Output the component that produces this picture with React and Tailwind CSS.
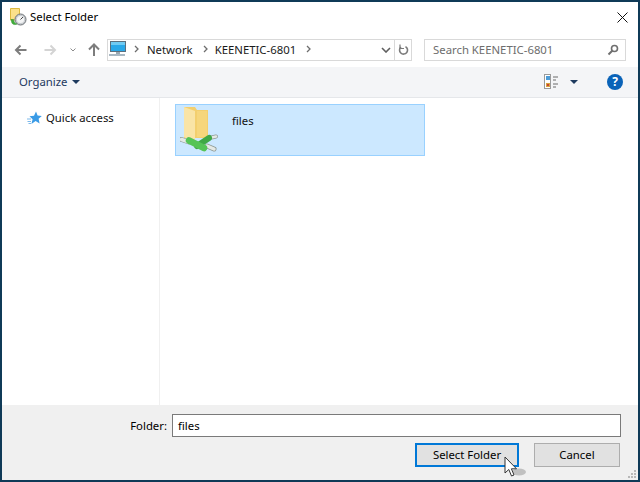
import React from 'react';

const font = "font-['Noto_Sans','Open_Sans',sans-serif]";

// title bar icon, folder with the green arrow and clock
const TitleIcon = () => (
  <svg width="18" height="18" viewBox="0 0 18 18" className="shrink-0">
    <path d="M1.5 0.5H10.5V12H1.5Z" fill="#fbe08a" stroke="#dcb93f" />
    <circle cx="11.5" cy="11.5" r="5.5" fill="#c8ccd0" stroke="#6f7478" />
    <circle cx="11.5" cy="11.5" r="3.6" fill="#f3f4f5" />
    <path d="M11.5 11.5L14 9" stroke="#444" strokeWidth="1" />
    <path d="M2 11.5H4.5C4.8 14 6 15.5 8 16C5 17.5 2.8 16 2.5 13.5Z" fill="#3fae3a" stroke="#2a8a28" strokeWidth="0.5" />
  </svg>
);

const Arrow = ({ color, flip }) => (
  <svg width="13" height="12" viewBox="0 0 13 12" className={flip ? 'rotate-180' : ''}>
    <path d="M12.5 6H2M6.5 1.5L2 6l4.5 4.5" fill="none" stroke={color} strokeWidth="2" />
  </svg>
);

const Crumb = () => (
  <svg width="6" height="8" viewBox="0 0 6 8" className="shrink-0">
    <path d="M1 1l3 3-3 3" fill="none" stroke="#6d6d6d" strokeWidth="1.3" />
  </svg>
);

const Pc = () => (
  <svg width="18" height="16" viewBox="0 0 18 16" className="shrink-0">
    <rect x="1.5" y="0.5" width="15" height="10" fill="#29a8e8" stroke="#5b6f7d" />
    <rect x="2" y="1" width="14" height="3" fill="#6fcbf3" />
    <rect x="7" y="11" width="4" height="2" fill="#9aa8b2" />
    <rect x="0" y="13" width="16" height="2" fill="#a9b8c3" />
  </svg>
);

const Caret = ({ color = '#1e3a5f' }) => (
  <svg width="8" height="4" viewBox="0 0 8 4" className="shrink-0">
    <path d="M0 0h8L4 4Z" fill={color} />
  </svg>
);

const ViewIcon = () => (
  <svg width="16" height="16" viewBox="0 0 16 16">
    <rect x="0.5" y="0.5" width="6" height="14" fill="#fff" stroke="#9a9a9a" />
    <rect x="2" y="2" width="4" height="4" fill="#4c9bd6" />
    <rect x="2" y="9" width="4" height="4" fill="#d9a441" />
    <rect x="3" y="10" width="2" height="2" fill="#c8432f" />
    <path d="M9 3h5M9 6h3M9 10h5M9 13h3" stroke="#6b6b6b" strokeWidth="1" />
  </svg>
);

// folder with the two network pipes under it
const NetFolder = () => (
  <svg width="40" height="50" viewBox="0 0 40 50" className="shrink-0">
    <path d="M4 1H15L17 4H28V32H4Z" fill="#f3cf6e" />
    <path d="M4 1L15 5V37L4 31Z" fill="#f9e4a6" />
    <path d="M17 5H27V31H17Z" fill="#f6d67c" />
    <path d="M1.5 33.5L9 36" stroke="#8f9a93" strokeWidth="5" strokeLinecap="round" />
    <path d="M1.5 33.5L9 36" stroke="#e4e9e5" strokeWidth="3.5" strokeLinecap="round" />
    <path d="M27 40L34 43" stroke="#8f9a93" strokeWidth="5" strokeLinecap="round" />
    <path d="M27 40L34 43" stroke="#e4e9e5" strokeWidth="3.5" strokeLinecap="round" />
    <path d="M29 32L36 30.5" stroke="#8f9a93" strokeWidth="4" strokeLinecap="round" />
    <path d="M29 32L36 30.5" stroke="#e4e9e5" strokeWidth="2.5" strokeLinecap="round" />
    <path d="M17 40L29 32" stroke="#3fa845" strokeWidth="6" strokeLinecap="round" />
    <path d="M9 34.5L24 42" stroke="#55c456" strokeWidth="6.5" strokeLinecap="round" />
  </svg>
);

const Star = () => (
  <svg width="15" height="14" viewBox="0 0 15 14" className="shrink-0">
    <path d="M9 0.5L10.6 4.6L14.8 5L11.6 7.8L12.6 12.5L8.6 10L4.4 13L5.6 8.2L2.5 5.2L7 4.8Z" fill="#3a9be6" />
    <path d="M0 8H4M0.5 10.5H4M1.5 12.5H4" stroke="#7db9ea" strokeWidth="1" />
  </svg>
);

const App = () => {
  return (
    <div className={`relative w-[640px] h-[482px] overflow-hidden bg-white border-2 border-[#0f3a57] text-[11.35px] text-black ${font} flex flex-col`}>
      {/* Title bar */}
      <div className="h-[30px] flex items-center pl-[7px] pr-[8px] shrink-0">
        <TitleIcon />
        <span className="ml-[3px]">Select Folder</span>
        <svg width="11" height="11" viewBox="0 0 11 11" className="ml-auto mr-[2px]">
          <path d="M0.5 0.5l10 10M10.5 0.5l-10 10" stroke="#111" strokeWidth="1" />
        </svg>
      </div>

      {/* Address row */}
      <div className="h-[35px] flex items-center shrink-0 pl-[12px]">
        <Arrow color="#7d7d7d" />
        <span className="w-[17px]" />
        <Arrow color="#d4d4d4" flip />
        <svg width="6" height="4" viewBox="0 0 6 4" className="ml-[13px]">
          <path d="M0.5 0.5L3 3l2.5-2.5" fill="none" stroke="#8c8c8c" />
        </svg>
        <svg width="12" height="13" viewBox="0 0 12 13" className="ml-[12px]">
          <path d="M6 13V2M1 6.5L6 1.5l5 5" fill="none" stroke="#7d7d7d" strokeWidth="2" />
        </svg>
        <div className="ml-[7px] w-[305px] h-[22px] border border-[#d9d9d9] flex items-center">
          <div className="pl-[1px] flex items-center grow">
            <Pc />
            <span className="ml-[7px]"><Crumb /></span>
            <span className="ml-[7px] text-[#1a1a1a]">Network</span>
            <span className="ml-[10px]"><Crumb /></span>
            <span className="ml-[6px] text-[#1a1a1a]">KEENETIC-6801</span>
            <span className="ml-[10px]"><Crumb /></span>
          </div>
          <svg width="10" height="6" viewBox="0 0 10 6" className="mr-[3px]">
            <path d="M1 1l4 4 4-4" fill="none" stroke="#5f5f5f" strokeWidth="1.6" />
          </svg>
          <div className="w-[17px] h-full border-l border-[#d9d9d9] flex items-center justify-center">
            <svg width="11" height="12" viewBox="0 0 11 12">
              <path d="M7.5 2.6A4 4 0 1 1 3 3" fill="none" stroke="#7a7a7a" strokeWidth="1.6" />
              <path d="M2 0.5V4.5H6" fill="none" stroke="#7a7a7a" strokeWidth="1.2" />
            </svg>
          </div>
        </div>
        <div className="ml-[12px] w-[202px] h-[22px] border border-[#d9d9d9] flex items-center pl-[8px] pr-[6px] text-[#6d6d6d]">
          <span>Search KEENETIC-6801</span>
          <svg width="12" height="12" viewBox="0 0 12 12" className="ml-auto">
            <circle cx="7.5" cy="4.5" r="3" fill="none" stroke="#6f6f6f" strokeWidth="1.6" />
            <path d="M5.5 6.5L1.5 10.5" stroke="#6f6f6f" strokeWidth="2" />
          </svg>
        </div>
      </div>

      {/* Toolbar */}
      <div className="h-[31px] bg-[#f4f5f7] border-b border-[#e5e7ea] flex items-center shrink-0 pl-[17px] pr-[15px]">
        <span className="text-[#1e3a5f]">Organize</span>
        <span className="ml-[5px]"><Caret /></span>
        <span className="ml-auto"><ViewIcon /></span>
        <span className="ml-[10px]"><Caret /></span>
        <div className="ml-[29px] w-[16px] h-[16px] rounded-full bg-[#0a63b8] text-white flex items-center justify-center font-bold text-[12px]">?</div>
      </div>

      {/* Main */}
      <div className="flex grow min-h-0">
        <div className="w-[158px] border-r border-[#f0f0f0] shrink-0 pt-[11px] pl-[25px]">
          <div className="flex items-center gap-[4px]">
            <Star />
            <span className="text-[#111]">Quick access</span>
          </div>
        </div>
        <div className="grow pt-[6px] pl-[15px]">
          <div className="w-[250px] h-[52px] bg-[#cce8ff] border border-[#99d1ff] flex pl-[4px] pt-[1px]">
            <NetFolder />
            <span className="ml-[12px] mt-[6px] text-[#111]">files</span>
          </div>
        </div>
      </div>

      {/* Bottom panel */}
      <div className="h-[75px] bg-[#f0f0f0] shrink-0 flex flex-col pt-[9px] pr-[17px] items-end">
        <div className="flex items-center">
          <span>Folder:</span>
          <div className="ml-[5px] w-[449px] h-[23px] bg-white border border-[#7a7a7a] flex items-center pl-[5px]">files</div>
        </div>
        <div className="flex mt-[6px] gap-[15px] mr-[1px]">
          <div className="w-[104px] h-[24px] bg-[#e1e1e1] border-2 border-[#0078d7] flex items-center justify-center">Select Folder</div>
          <div className="w-[86px] h-[24px] bg-[#e1e1e1] border border-[#adadad] flex items-center justify-center">Cancel</div>
        </div>
      </div>

      {/* Mouse pointer */}
      <svg width="24" height="24" viewBox="0 0 24 24" className="absolute left-[502px] top-[454px]">
        <ellipse cx="15" cy="16" rx="7" ry="3.5" fill="#000" opacity="0.2" />
        <path d="M1 1V17L4.8 13.5L7.5 20L10 19L7.4 12.8H12.5Z" fill="#fff" stroke="#333" strokeWidth="1" />
      </svg>

      {/* Resize grip */}
      <svg width="10" height="10" viewBox="0 0 10 10" className="absolute right-[1px] bottom-[1px]">
        <path d="M7 1h2v2H7zM4 4h2v2H4zM7 4h2v2H7zM1 7h2v2H1zM4 7h2v2H4zM7 7h2v2H7z" fill="#b8b8b8" />
      </svg>
    </div>
  );
};

export default App;
